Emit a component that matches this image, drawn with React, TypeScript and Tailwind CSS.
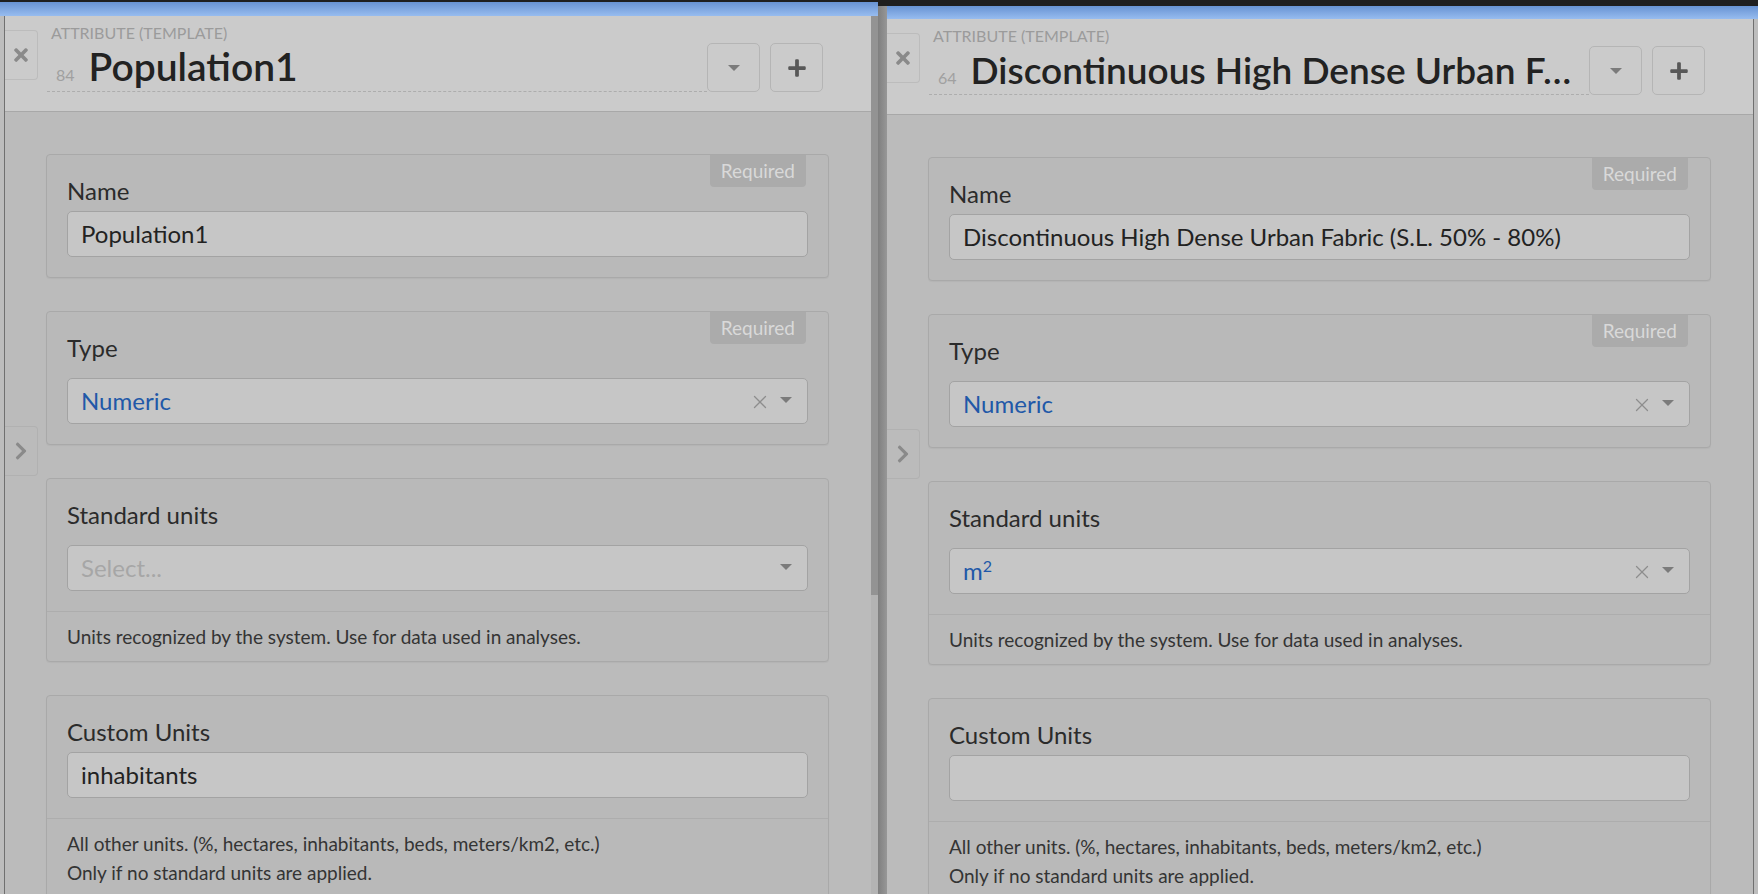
import { FaTimes, FaPlus, FaChevronRight } from 'react-icons/fa';
import { X } from 'lucide-react';
import type { ReactNode } from 'react';

// small grey triangle used by the selects and the header dropdown button
function Caret({ className = '' }: { className?: string }) {
  return (
    <span
      className={`inline-block h-0 w-0 border-x-[6px] border-t-[6px] border-x-transparent border-t-[#7b7b7b] ${className}`}
    />
  );
}

function Card({
  label,
  required,
  help,
  children,
}: {
  label: string;
  required?: boolean;
  help?: ReactNode;
  children: ReactNode;
}) {
  return (
    <div className="relative rounded-[4px] border border-[#a9a9a9] bg-[#b9b9b9] shadow-[0_1px_1px_rgba(0,0,0,0.04)]">
      {required && (
        <div className="absolute right-[22px] top-0 h-[32px] rounded-b-[4px] bg-[#ababab] px-[11px] text-[19px] leading-[32px] text-[#d9d9d9]">
          Required
        </div>
      )}
      <div className="px-[20px] pb-[20px] pt-[20px]">
        <div className="text-[24px] leading-[31px] text-[#2b2b2b]">{label}</div>
        {children}
      </div>
      {help && (
        <div className="border-t border-[#adadad] px-[20px] py-[10px] text-[19px] leading-[29px] text-[#343434]">
          {help}
        </div>
      )}
    </div>
  );
}

function TextInput({ value }: { value: string }) {
  return (
    <div className="mt-[5px] flex h-[46px] items-center rounded-[5px] border border-[#a3a3a3] bg-[#c6c6c6] px-[13px] text-[24px] text-[#222]">
      {value}
    </div>
  );
}

function Select({ children, clearable }: { children: ReactNode; clearable?: boolean }) {
  return (
    <div className="mt-[15px] flex h-[46px] items-center rounded-[5px] border border-[#a3a3a3] bg-[#c6c6c6] pl-[13px] pr-[15px]">
      <div className="min-w-0 flex-1 text-[24px]">{children}</div>
      {clearable && <X size={22} strokeWidth={1.4} color="#8d8d8d" className="mr-[9px] mt-[2px]" />}
      <Caret className="mb-[3px]" />
    </div>
  );
}

function Panel({
  number,
  title,
  titleSize,
  nameValue,
  units,
  customUnits,
}: {
  number: string;
  title: string;
  titleSize: 'big' | 'long';
  nameValue: string;
  units?: ReactNode;
  customUnits: string;
}) {
  return (
    <div className="relative flex min-w-0 flex-1 flex-col">
      {/* Header */}
      <div className="relative h-[96px] shrink-0 border-b border-[#a8a8a8] bg-[#cbcbcb] pl-[42px] pr-[48px] pt-[9px]">
        <div className="absolute left-0 top-[14px] flex h-[50px] w-[33px] items-center justify-center rounded-r-[4px] border border-l-0 border-[#bcbcbc]">
          <FaTimes size={20} color="#8a8a8a" />
        </div>
        <div className="flex items-end">
          <div className="min-w-0 flex-1 border-b border-dashed border-[#adadad]">
            <div className="pl-[4px] text-[16px] leading-[16px] text-[#9b9b9b]">ATTRIBUTE (TEMPLATE)</div>
            <div className="flex h-[50px] items-baseline pl-[9px]">
              <span className="shrink-0 text-[16px] text-[#a0a0a0]">{number}</span>
              <span
                className={
                  titleSize === 'big'
                    ? 'ml-[14px] min-w-0 truncate pr-[14px] text-[39px] font-semibold leading-[50px] text-[#222]'
                    : 'ml-[14px] min-w-0 truncate pr-[14px] text-[37px] font-semibold leading-[52px] text-[#222]'
                }
              >
                {title}
              </span>
            </div>
          </div>
          <div className="flex shrink-0 gap-[10px]">
            <div className="flex h-[49px] w-[53px] items-center justify-center rounded-[5px] border border-[#b5b5b5]">
              <Caret />
            </div>
            <div className="flex h-[49px] w-[53px] items-center justify-center rounded-[5px] border border-[#b5b5b5]">
              <FaPlus size={20} color="#585858" />
            </div>
          </div>
        </div>
      </div>

      {/* Body */}
      <div className="flex flex-1 flex-col gap-[33px] bg-[#bbbbbb] pl-[41px] pr-[42px] pt-[42px]">
        <Card label="Name" required>
          <TextInput value={nameValue} />
        </Card>
        <Card label="Type" required>
          <Select clearable>
            <span className="text-[#2158a8]">Numeric</span>
          </Select>
        </Card>
        <Card label="Standard units" help="Units recognized by the system. Use for data used in analyses.">
          <Select clearable={!!units}>
            {units ?? <span className="text-[#a6a6a6]">Select...</span>}
          </Select>
        </Card>
        <Card
          label="Custom Units"
          help={
            <>
              All other units. (%, hectares, inhabitants, beds, meters/km2, etc.)
              <br />
              Only if no standard units are applied.
            </>
          }
        >
          <TextInput value={customUnits} />
        </Card>
      </div>

      {/* side tab */}
      <div className="absolute left-0 top-[410px] flex h-[50px] w-[33px] items-center justify-center rounded-r-[4px] border border-l-0 border-[#b1b1b1]">
        <FaChevronRight size={20} color="#8a8a8a" />
      </div>
    </div>
  );
}

export default function App() {
  return (
    <div className="flex h-[894px] w-full overflow-hidden bg-[#1f1f1f] font-[Lato,sans-serif]">
      {/* left window */}
      <div className="flex w-[878px] shrink-0 flex-col">
        <div className="h-[2px] shrink-0 bg-[#1f1f1f]" />
        <div className="h-[14px] shrink-0 bg-gradient-to-b from-[#6893d3] to-[#97bcef]" />
        <div className="flex min-h-0 flex-1">
          <div className="w-[4px] shrink-0 bg-[#bdbdbd]" />
          <div className="flex min-w-0 flex-1 border-l border-[#707070]">
            <Panel number="84" title="Population1" titleSize="big" nameValue="Population1" customUnits="inhabitants" />
          </div>
          {/* scrollbar */}
          <div className="flex w-[7px] shrink-0 flex-col bg-[#b3b3b3]">
            <div className="h-[579px] bg-[#939393]" />
          </div>
        </div>
      </div>

      {/* gap shadow */}
      <div className="flex w-[9px] shrink-0 flex-col">
        <div className="h-[6px] shrink-0 bg-[#1f1f1f]" />
        <div className="flex-1 bg-gradient-to-r from-[#7f7f7f] to-[#979797]" />
      </div>

      {/* right window */}
      <div className="flex min-w-0 flex-1 flex-col">
        <div className="h-[6px] shrink-0 bg-[#1f1f1f]" />
        <div className="h-[13px] shrink-0 bg-gradient-to-b from-[#6893d3] to-[#97bcef]" />
        <div className="flex min-h-0 flex-1">
          <div className="flex w-[867px] shrink-0 border-r border-[#707070]">
            <Panel
              number="64"
              title="Discontinuous High Dense Urban Fabric (S.L. 50% - 80%)"
              titleSize="long"
              nameValue="Discontinuous High Dense Urban Fabric (S.L. 50% - 80%)"
              units={
                <span className="text-[#2158a8]">
                  m<sup className="text-[16px]">2</sup>
                </span>
              }
              customUnits=""
            />
          </div>
          <div className="flex-1 bg-[#bdbdbd]" />
        </div>
      </div>
    </div>
  );
}
